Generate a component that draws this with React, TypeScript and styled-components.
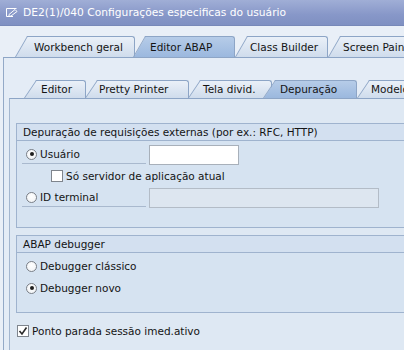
import styled, { createGlobalStyle } from "styled-components";

const GlobalStyle = createGlobalStyle`
  body {
    margin: 0;
    font-family: "DejaVu Sans", "Liberation Sans", sans-serif;
    font-size: 10.5px;
    color: #141414;
  }
`;

const outerTabs = [
  { label: "Workbench geral", gap: 27, w: 108, pad: 7 },
  { label: "Editor ABAP", gap: 10, w: 90, pad: 5, active: true },
  { label: "Class Builder", gap: 12, w: 81, pad: 3 },
  { label: "Screen Painter", gap: 12, w: 100, pad: 3 },
];

const innerTabs = [
  { label: "Editor", gap: 32, w: 50, pad: 5 },
  { label: "Pretty Printer", gap: 11, w: 92, pad: 2 },
  { label: "Tela divid.", gap: 11, w: 72, pad: 3 },
  { label: "Depuração", gap: 3, w: 82, pad: 5, active: true },
  { label: "Modelo", gap: 12, w: 60, pad: 2 },
];

export default function App() {
  return (
    <Window>
      <GlobalStyle />
      <TitleBar>
        <svg width="13" height="11" viewBox="0 0 13 11">
          <path
            d="M1.5 1.5 H11.5 M1.5 1.5 V9.5 H8 M4 7.5 L10 2.5 L12 4.5 L6 9 L4 9.5 Z"
            fill="none"
            stroke="#fff"
            strokeWidth="1"
          />
        </svg>
        <span>DE2(1)/040 Configurações especificas do usuário</span>
      </TitleBar>

      <TabStrip $top={10} $h={21}>
        {outerTabs.map((t) => (
          <Tab key={t.label} $gap={t.gap} $w={t.w} $pad={t.pad} $h={21} $active={t.active}>
            {t.label}
          </Tab>
        ))}
      </TabStrip>

      <OuterPanel>
        <TabStrip $top={22} $h={18}>
          {innerTabs.map((t) => (
            <Tab key={t.label} $gap={t.gap} $w={t.w} $pad={t.pad} $h={18} $active={t.active}>
              {t.label}
            </Tab>
          ))}
        </TabStrip>

        <InnerPanel>
          <Group>
            <GroupHeader>Depuração de requisições externas (por ex.: RFC, HTTP)</GroupHeader>
            <GroupBody $bottom={18}>
              <Row>
                <LabelCell $underline>
                  <Radio $checked />
                  Usuário
                </LabelCell>
                <Input />
              </Row>
              <Row>
                <CheckLabel $indent={29}>
                  <CheckBox />
                  Só servidor de aplicação atual
                </CheckLabel>
              </Row>
              <Row>
                <LabelCell $underline>
                  <Radio />
                  ID terminal
                </LabelCell>
                <Input $disabled />
              </Row>
            </GroupBody>
          </Group>

          <Group $top={7}>
            <GroupHeader>ABAP debugger</GroupHeader>
            <GroupBody $bottom={12}>
              <Row $h={22}>
                <LabelCell>
                  <Radio />
                  Debugger clássico
                </LabelCell>
              </Row>
              <Row $h={22}>
                <LabelCell>
                  <Radio $checked />
                  Debugger novo
                </LabelCell>
              </Row>
            </GroupBody>
          </Group>

          <BottomRow>
            <CheckLabel $indent={1}>
              <CheckBox>
                <svg width="10" height="10" viewBox="0 0 10 10">
                  <path d="M1.5 5 L4 8 L8.5 1.5" fill="none" stroke="#2a2a2a" strokeWidth="1.6" />
                </svg>
              </CheckBox>
              Ponto parada sessão imed.ativo
            </CheckLabel>
          </BottomRow>
        </InnerPanel>
      </OuterPanel>
    </Window>
  );
}

const Window = styled.div`
  width: 404px;
  height: 350px;
  overflow: hidden;
  background: #e9eff7;
  display: flex;
  flex-direction: column;
`;

const TitleBar = styled.div`
  height: 26px;
  flex-shrink: 0;
  display: flex;
  align-items: center;
  gap: 5px;
  padding-left: 5px;
  color: #fff;
  font-size: 10.7px;
  background: linear-gradient(#a0aed6, #8797c8 60%, #7f90c2);
  border-bottom: 1px solid #7788b8;
  box-sizing: border-box;
`;

const TabStrip = styled.div<{ $top: number; $h: number }>`
  display: flex;
  align-items: flex-end;
  height: ${(p) => p.$h}px;
  margin-top: ${(p) => p.$top}px;
  flex-shrink: 0;
  white-space: nowrap;
`;

const Tab = styled.div<{ $gap: number; $w: number; $pad: number; $h: number; $active?: boolean }>`
  position: relative;
  z-index: ${(p) => (p.$active ? 3 : 1)};
  flex-shrink: 0;
  box-sizing: border-box;
  margin-left: ${(p) => p.$gap}px;
  width: ${(p) => p.$w}px;
  height: ${(p) => p.$h}px;
  padding-left: ${(p) => p.$pad}px;
  line-height: ${(p) => p.$h - 1}px;
  border-top: 1px solid #8da5c6;
  border-right: 1px solid #8da5c6;
  border-top-right-radius: 3px;
  background: ${(p) =>
    p.$active
      ? "linear-gradient(#b6cce8, #9bb8de)"
      : "linear-gradient(#eaf0f8, #cfdcec)"};

  &::before {
    content: "";
    position: absolute;
    z-index: -1;
    top: -1px;
    bottom: 0;
    left: -12px;
    width: 24px;
    border-top: 1px solid #8da5c6;
    border-left: 1px solid #8da5c6;
    background: inherit;
    transform-origin: bottom left;
    transform: skewX(${(p) => -Math.round((Math.atan(12 / p.$h) * 180) / Math.PI)}deg);
  }
`;

const OuterPanel = styled.div`
  flex: 1;
  margin-left: 3px;
  border-left: 1px solid #93a9c7;
  border-top: 1px solid #8da5c6;
  background: #e4ecf6;
  display: flex;
  flex-direction: column;
`;

const InnerPanel = styled.div`
  flex: 1;
  margin-left: 5px;
  border-left: 1px solid #a3b6cf;
  border-top: 1px solid #8da5c6;
  background: #dee8f3;
  padding: 24px 0 0 6px;
  display: flex;
  flex-direction: column;
`;

const Group = styled.div<{ $top?: number }>`
  width: 430px;
  margin-top: ${(p) => p.$top ?? 0}px;
  border: 1px solid #9fb3ce;
  background: #d6e3f1;
`;

const GroupHeader = styled.div`
  height: 16px;
  line-height: 16px;
  padding-left: 6px;
  border-bottom: 1px solid #9fb3ce;
  background: #d3e0f0;
`;

const GroupBody = styled.div<{ $bottom: number }>`
  padding: 3px 0 ${(p) => p.$bottom}px 5px;
  display: flex;
  flex-direction: column;
`;

const Row = styled.div<{ $h?: number }>`
  height: ${(p) => p.$h ?? 21.5}px;
  display: flex;
  align-items: center;
`;

const LabelCell = styled.div<{ $underline?: boolean }>`
  width: 124px;
  height: 19px;
  box-sizing: border-box;
  display: flex;
  align-items: center;
  gap: 3px;
  padding-left: 4px;
  border-bottom: 1px solid ${(p) => (p.$underline ? "#a9b9ce" : "transparent")};
`;

const Radio = styled.span<{ $checked?: boolean }>`
  width: 11px;
  height: 11px;
  box-sizing: border-box;
  border-radius: 50%;
  border: 1px solid #7a7f87;
  background: radial-gradient(circle at 50% 40%, #ffffff, #eef1f4);
  position: relative;
  flex-shrink: 0;

  &::after {
    content: "";
    display: ${(p) => (p.$checked ? "block" : "none")};
    position: absolute;
    left: 2.5px;
    top: 2.5px;
    width: 4px;
    height: 4px;
    border-radius: 50%;
    background: #1e1e1e;
  }
`;

const CheckLabel = styled.div<{ $indent: number }>`
  display: flex;
  align-items: center;
  gap: 3px;
  padding-left: ${(p) => p.$indent}px;
`;

const CheckBox = styled.span`
  width: 12px;
  height: 12px;
  box-sizing: border-box;
  border: 1px solid #7f858d;
  background: #fff;
  display: flex;
  align-items: center;
  justify-content: center;
  flex-shrink: 0;
`;

const Input = styled.div<{ $disabled?: boolean }>`
  margin-left: 3px;
  width: ${(p) => (p.$disabled ? 230 : 90)}px;
  height: 20px;
  box-sizing: border-box;
  border: 1px solid ${(p) => (p.$disabled ? "#b3bcc7" : "#a8b0ba")};
  background: ${(p) => (p.$disabled ? "#dde6f0" : "#fff")};
`;

const BottomRow = styled.div`
  height: 21px;
  margin-top: 8px;
  display: flex;
  align-items: center;
`;
